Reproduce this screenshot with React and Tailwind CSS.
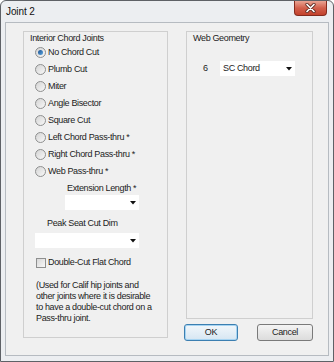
import React from "react";

const font = { fontFamily: '"Liberation Sans", Arial, sans-serif' };

function Radio({ checked, label }) {
  return (
    <div className="flex h-[17px] items-center pl-[11px]">
      <div className="flex h-[11px] w-[11px] items-center justify-center rounded-full border border-[#8e8f8f] bg-gradient-to-br from-[#d4d4d4] to-[#f8f8f8]">
        {checked && (
          <div className="h-[5px] w-[5px] rounded-full bg-gradient-to-br from-[#1a4f8f] to-[#5fa8e0]" />
        )}
      </div>
      <span className="ml-[1px] pl-[1px]">{label}</span>
    </div>
  );
}

function Arrow() {
  return (
    <svg width="6" height="4" viewBox="0 0 6 4" className="block">
      <path d="M0 0 L6 0 L3 3.5 Z" fill="#111" />
    </svg>
  );
}

function Drop({ w, text }) {
  return (
    <div
      className="flex h-[15px] items-center justify-between bg-white pr-[3px] pl-[3px]"
      style={{ width: w }}
    >
      <span>{text}</span>
      <Arrow />
    </div>
  );
}

export default function App() {
  return (
    <div
      className="relative flex h-[362px] w-[334px] flex-col rounded-t-[6px] border border-[#5e6166] bg-[#eceef1] text-[9px] leading-[11px] tracking-[-0.35px] text-[#1c1c1c]"
      style={font}
    >
      {/* title bar */}
      <div className="flex h-[21px] items-start">
        <span className="ml-[5px] mt-[5px] text-[10px] leading-[12px] tracking-[-0.1px] text-[#111]">
          Joint 2
        </span>
        <div className="ml-auto mr-[6px] flex h-[15px] w-[33px] items-center justify-center rounded-b-[4px] border border-t-0 border-[#842b1e] bg-gradient-to-b from-[#e9a393] via-[#d25f4c] to-[#c2412c]">
          <svg width="11" height="10" viewBox="0 0 11 10">
            <path d="M2 1.5 L9 8.5 M9 1.5 L2 8.5" stroke="#5a2a22" strokeWidth="3.2" strokeLinecap="round" />
            <path d="M2 1.5 L9 8.5 M9 1.5 L2 8.5" stroke="#ffffff" strokeWidth="1.7" strokeLinecap="round" />
          </svg>
        </div>
      </div>

      {/* client area */}
      <div className="mx-[4px] mb-[5px] flex flex-1 border border-[#b6bbc1] bg-[#f0f0f0] pl-[17px] pt-[8px]">
        {/* left group */}
        <div className="flex h-[307px] w-[145px] flex-col border border-[#cfcfcf]">
          <div className="ml-[6px] mt-[1px]">Interior Chord Joints</div>
          <Radio checked label="No Chord Cut" />
          <Radio label="Plumb Cut" />
          <Radio label="Miter" />
          <Radio label="Angle Bisector" />
          <Radio label="Square Cut" />
          <Radio label="Left Chord Pass-thru *" />
          <Radio label="Right Chord Pass-thru *" />
          <Radio label="Web Pass-thru *" />

          <div className="ml-[43px] mt-[3px]">Extension Length *</div>
          <div className="ml-[41px] mt-[1px]">
            <Drop w={74} />
          </div>

          <div className="ml-[23px] mt-[8px]">Peak Seat Cut Dim</div>
          <div className="ml-[11px] mt-[4px]">
            <Drop w={104} />
          </div>

          <div className="ml-[12px] mt-[9px] flex h-[11px] items-center">
            <div className="h-[10px] w-[10px] border border-[#8e8f8f] bg-gradient-to-br from-[#d8d8d8] to-[#f8f8f8]" />
            <span className="ml-[2px]">Double-Cut Flat Chord</span>
          </div>

          <div className="ml-[12px] mt-[12px]">
            (Used for Calif hip joints and
            <br />
            other joints where it is desirable
            <br />
            to have a double-cut chord on a
            <br />
            Pass-thru joint.
          </div>
        </div>

        {/* right column */}
        <div className="ml-[18px] flex w-[127px] flex-col">
          <div className="flex h-[288px] flex-col border border-[#cfcfcf]">
            <div className="ml-[6px] mt-[1px]">Web Geometry</div>
            <div className="ml-[16px] mt-[17px] flex items-center">
              <span className="w-[17px]">6</span>
              <Drop w={75} text="SC Chord" />
            </div>
          </div>
          <div className="-ml-[2px] mt-[5px] flex gap-[19px]">
            <div className="flex h-[17px] w-[54px] items-center justify-center rounded-[3px] border border-[#3c7fb1] bg-gradient-to-b from-[#f2f7fb] to-[#d6e6f2] shadow-[inset_0_0_0_1px_#a6d4f2]">
              OK
            </div>
            <div className="flex h-[17px] w-[56px] items-center justify-center rounded-[3px] border border-[#7a7a7a] bg-gradient-to-b from-[#f4f4f4] to-[#dcdcdc]">
              Cancel
            </div>
          </div>
        </div>
      </div>
    </div>
  );
}
